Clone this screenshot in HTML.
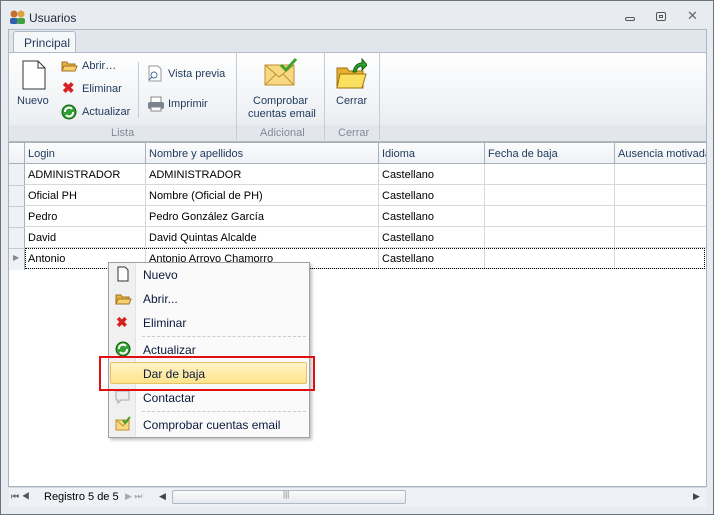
<!DOCTYPE html>
<html><head><style>
*{margin:0;padding:0;box-sizing:border-box}
body{width:714px;height:515px;position:relative;overflow:hidden;background:#e8ebef;font-family:"Liberation Sans",sans-serif;font-size:11px;color:#1e2a3c}
.a{position:absolute}
.t{position:absolute;white-space:nowrap}
.rb{color:#1e395b}
.grp{color:#7f8a99}
.c{position:absolute;height:21px;border-right:1px solid #d5d9df;border-bottom:1px solid #d5d9df;padding:5px 0 0 3px;white-space:nowrap;overflow:hidden;color:#000}
.h{position:absolute;height:21px;top:143px;border-right:1px solid #a8b0bb;border-bottom:1px solid #a8b0bb;padding:5px 0 0 3px;background:linear-gradient(#fbfcfd,#eef1f5);white-space:nowrap;overflow:hidden;color:#1e395b}
.mi{position:absolute;left:143px;white-space:nowrap;font-size:12px;color:#0a1a3c}
.sep{position:absolute;left:142px;width:164px;border-top:1px dashed #c8ccd2}
</style></head><body>
<div class="a" style="left:0;top:0;width:714px;height:515px;border:1px solid #6b7580"></div>
<svg class="a" style="left:9px;top:9px" width="18" height="16"><circle cx="5" cy="5" r="3.5" fill="#c07030"/><circle cx="12" cy="5" r="3.5" fill="#e0a040"/><rect x="1" y="9" width="8" height="6" rx="2" fill="#3060b0"/><rect x="8" y="9" width="8" height="6" rx="2" fill="#40a040"/></svg>
<div class="t" style="left:29px;top:11px;font-size:12px;color:#1e2a3c">Usuarios</div>
<div class="a" style="left:625px;top:17px;width:10px;height:4px;border:1px solid #555;border-radius:2px"></div>
<div class="a" style="left:656px;top:12px;width:10px;height:9px;border:1px solid #555;border-radius:2px"><div style="margin:2px 2px;width:4px;height:3px;border:1px solid #555"></div></div>
<div class="t" style="left:687px;top:8px;font-size:13px;color:#666">✕</div>
<div class="a" style="left:8px;top:29px;width:699px;height:113px;border:1px solid #b0b8c3;background:#e1e6ec"></div>
<div class="a" style="left:13px;top:31px;width:63px;height:22px;border:1px solid #b0b8c3;border-bottom:none;background:#f6f7f9;border-radius:3px 3px 0 0"></div>
<div class="t rb" style="left:24px;top:36px;font-size:12px">Principal</div>
<div class="a" style="left:9px;top:52px;width:697px;height:89px;border-top:1px solid #b0b8c3;background:linear-gradient(#fefefe,#eef1f4 70%,#e4e8ed)"></div>
<div class="a" style="left:9px;top:125px;width:697px;height:15px;background:#e3e7ec"></div>
<div class="a" style="left:236px;top:52px;width:1px;height:88px;background:#c5ccd5"></div>
<div class="a" style="left:324px;top:52px;width:1px;height:88px;background:#c5ccd5"></div>
<div class="a" style="left:379px;top:52px;width:1px;height:88px;background:#c5ccd5"></div>
<div class="a" style="left:138px;top:62px;width:1px;height:56px;background:#c5ccd5"></div>
<svg class="a" style="left:22px;top:60px" width="24" height="30"><path d="M1 1H16L23 8V29H1Z" fill="#fff" stroke="#333"/><path d="M16 1V8H23" fill="none" stroke="#333"/></svg>
<div class="t rb" style="left:17px;top:95px">Nuevo</div>
<svg class="a" style="left:61px;top:59px" width="17" height="14"><path d="M1 3H6L7 5H14V12H1Z" fill="#e8b040" stroke="#a07020"/><path d="M3 7H16L14 12H1Z" fill="#f8d070" stroke="#a07020"/></svg>
<div class="t rb" style="left:82px;top:60px">Abrir…</div>
<div class="t" style="left:62px;top:79px;color:#d82020;font-size:15px;font-weight:bold">✖</div>
<div class="t rb" style="left:82px;top:83px">Eliminar</div>
<svg class="a" style="left:61px;top:104px" width="16" height="16"><circle cx="8" cy="8" r="7" fill="#30a030" stroke="#106010"/><path d="M4 8A4 4 0 0 1 11 5M12 8A4 4 0 0 1 5 11" stroke="#fff" stroke-width="2" fill="none"/></svg>
<div class="t rb" style="left:82px;top:106px">Actualizar</div>
<div class="t grp" style="left:111px;top:127px">Lista</div>
<svg class="a" style="left:148px;top:65px" width="14" height="17"><path d="M1 1H10L13 4V16H1Z" fill="#fff" stroke="#999"/><circle cx="6" cy="10" r="3" fill="none" stroke="#4070a0"/><path d="M4 12L1 15" stroke="#4070a0"/></svg>
<div class="t rb" style="left:168px;top:68px">Vista previa</div>
<svg class="a" style="left:147px;top:96px" width="18" height="16"><rect x="4" y="1" width="10" height="6" fill="#fff" stroke="#888"/><rect x="1" y="6" width="16" height="7" rx="2" fill="#7a8590"/><rect x="4" y="11" width="10" height="4" fill="#fff" stroke="#888"/></svg>
<div class="t rb" style="left:168px;top:98px">Imprimir</div>
<svg class="a" style="left:263px;top:57px" width="34" height="30"><rect x="2" y="8" width="29" height="20" fill="#f8d880" stroke="#c09030"/><path d="M2 8L16 20L31 8M2 28L13 17M31 28L20 17" fill="none" stroke="#c09030"/><path d="M18 8L23 13L33 2" fill="none" stroke="#40a030" stroke-width="3"/></svg>
<div class="t rb" style="left:253px;top:95px">Comprobar</div>
<div class="t rb" style="left:248px;top:108px">cuentas email</div>
<div class="t grp" style="left:260px;top:127px">Adicional</div>
<svg class="a" style="left:335px;top:58px" width="32" height="32"><path d="M2 10H12L14 13H28V30H2Z" fill="#e8b030" stroke="#a07010"/><path d="M5 16H31L27 30H2Z" fill="#fbe060" stroke="#a07010"/><path d="M18 14Q20 5 27 5L27 1L32 7L27 12L27 8Q22 8 21 14Z" fill="#30a030" stroke="#106010"/></svg>
<div class="t rb" style="left:336px;top:95px">Cerrar</div>
<div class="t grp" style="left:338px;top:127px">Cerrar</div>
<div class="a" style="left:8px;top:142px;width:699px;height:345px;background:#fff;border:1px solid #a8b0bb"></div>
<div class="a" style="left:9px;top:143px;width:16px;height:127px;background:#eef1f5;border-right:1px solid #a8b0bb"></div>
<div class="h" style="left:9px;width:16px"></div>
<div class="h" style="left:25px;width:121px">Login</div>
<div class="h" style="left:146px;width:233px">Nombre y apellidos</div>
<div class="h" style="left:379px;width:106px">Idioma</div>
<div class="h" style="left:485px;width:130px">Fecha de baja</div>
<div class="h" style="left:615px;width:91px;border-right:none">Ausencia motivada</div>
<div class="a" style="left:9px;top:185px;width:16px;border-top:1px solid #c8ccd2"></div>
<div class="a" style="left:9px;top:206px;width:16px;border-top:1px solid #c8ccd2"></div>
<div class="a" style="left:9px;top:227px;width:16px;border-top:1px solid #c8ccd2"></div>
<div class="a" style="left:9px;top:248px;width:16px;border-top:1px solid #c8ccd2"></div>
<div class="t" style="left:13px;top:253px;color:#888;font-size:8px">▶</div>
<div class="c" style="left:25px;top:164px;width:121px">ADMINISTRADOR</div><div class="c" style="left:146px;top:164px;width:233px">ADMINISTRADOR</div><div class="c" style="left:379px;top:164px;width:106px">Castellano</div><div class="c" style="left:485px;top:164px;width:130px"></div><div class="c" style="left:615px;top:164px;width:91px;border-right:none"></div>
<div class="c" style="left:25px;top:185px;width:121px">Oficial PH</div><div class="c" style="left:146px;top:185px;width:233px">Nombre (Oficial de PH)</div><div class="c" style="left:379px;top:185px;width:106px">Castellano</div><div class="c" style="left:485px;top:185px;width:130px"></div><div class="c" style="left:615px;top:185px;width:91px;border-right:none"></div>
<div class="c" style="left:25px;top:206px;width:121px">Pedro</div><div class="c" style="left:146px;top:206px;width:233px">Pedro González García</div><div class="c" style="left:379px;top:206px;width:106px">Castellano</div><div class="c" style="left:485px;top:206px;width:130px"></div><div class="c" style="left:615px;top:206px;width:91px;border-right:none"></div>
<div class="c" style="left:25px;top:227px;width:121px">David</div><div class="c" style="left:146px;top:227px;width:233px">David Quintas Alcalde</div><div class="c" style="left:379px;top:227px;width:106px">Castellano</div><div class="c" style="left:485px;top:227px;width:130px"></div><div class="c" style="left:615px;top:227px;width:91px;border-right:none"></div>
<div class="c" style="left:25px;top:248px;width:121px">Antonio</div><div class="c" style="left:146px;top:248px;width:233px">Antonio Arroyo Chamorro</div><div class="c" style="left:379px;top:248px;width:106px">Castellano</div><div class="c" style="left:485px;top:248px;width:130px"></div><div class="c" style="left:615px;top:248px;width:91px;border-right:none"></div>
<div class="a" style="left:25px;top:248px;width:680px;height:21px;border:1px dotted #000"></div>
<div class="a" style="left:9px;top:487px;width:697px;height:20px;background:#eef1f5;border-top:1px solid #d5d9df"></div>
<div class="t" style="left:11px;top:491px;color:#555;font-size:9px">⏮ ◀</div>
<div class="t" style="left:44px;top:491px;color:#000">Registro 5 de 5</div>
<div class="t" style="left:125px;top:491px;color:#aaa;font-size:9px">▶ ⏭</div>
<div class="t" style="left:159px;top:491px;color:#444;font-size:9px">◀</div>
<div class="a" style="left:172px;top:490px;width:234px;height:14px;border:1px solid #b0b8c3;border-radius:2px;background:linear-gradient(#fafbfc,#e6e9ed)"></div>
<div class="t" style="left:283px;top:490px;color:#777;font-size:8px">|||</div>
<div class="t" style="left:693px;top:491px;color:#444;font-size:9px">▶</div>
<div class="a" style="left:108px;top:262px;width:202px;height:176px;background:#fafafa;border:1px solid #a0a0a0;box-shadow:2px 2px 3px rgba(0,0,0,.25)"></div>
<div class="a" style="left:109px;top:263px;width:27px;height:174px;background:#f0f0f0;border-right:1px solid #e2e3e3"></div>
<svg class="a" style="left:117px;top:266px" width="12" height="16"><path d="M1 1H8L11 4V15H1Z" fill="#fff" stroke="#333"/></svg>
<div class="mi" style="top:268px">Nuevo</div>
<svg class="a" style="left:115px;top:292px" width="17" height="14"><path d="M1 3H6L7 5H14V12H1Z" fill="#e8b040" stroke="#a07020"/><path d="M3 7H16L14 12H1Z" fill="#f8d070" stroke="#a07020"/></svg>
<div class="mi" style="top:292px">Abrir...</div>
<div class="t" style="left:116px;top:314px;color:#d82020;font-size:14px;font-weight:bold">✖</div>
<div class="mi" style="top:316px">Eliminar</div>
<div class="sep" style="top:336px"></div>
<svg class="a" style="left:115px;top:341px" width="16" height="16"><circle cx="8" cy="8" r="7" fill="#30a030" stroke="#106010"/><path d="M4 8A4 4 0 0 1 11 5M12 8A4 4 0 0 1 5 11" stroke="#fff" stroke-width="2" fill="none"/></svg>
<div class="mi" style="top:343px">Actualizar</div>
<div class="a" style="left:110px;top:362px;width:197px;height:22px;border:1px solid #e5c365;border-radius:2px;background:linear-gradient(#fff4c8,#fde38a)"></div>
<div class="mi" style="top:367px">Dar de baja</div>
<svg class="a" style="left:115px;top:389px" width="16" height="16"><path d="M1 2H14V11H6L3 14V11H1Z" fill="#eee" stroke="#aaa"/></svg>
<div class="mi" style="top:391px">Contactar</div>
<div class="sep" style="top:411px"></div>
<svg class="a" style="left:115px;top:416px" width="16" height="15"><rect x="1" y="4" width="13" height="10" fill="#f8d880" stroke="#c09030"/><path d="M1 4L8 10L14 4" fill="none" stroke="#c09030"/><path d="M8 4L10 7L15 1" fill="none" stroke="#40a030" stroke-width="2"/></svg>
<div class="mi" style="top:418px">Comprobar cuentas email</div>
<div class="a" style="left:99px;top:356px;width:216px;height:35px;border:2px solid #e01010"></div>
</body></html>
